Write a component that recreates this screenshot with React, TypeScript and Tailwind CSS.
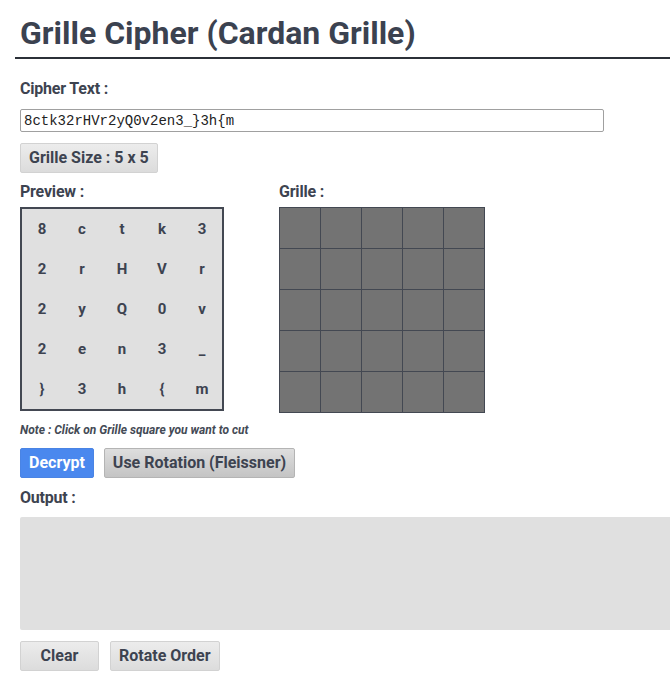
import { useState } from "react";

const CIPHER = "8ctk32rHVr2yQ0v2en3_}3h{m";

export default function App() {
  const [text, setText] = useState(CIPHER);
  const [cut, setCut] = useState<boolean[]>(Array(25).fill(false));
  const chars = text.padEnd(25, " ").slice(0, 25).split("");

  const grayBtn =
    "h-[30px] px-[8px] rounded-[2px] border border-[#d2d2d2] bg-gradient-to-b from-[#ececec] to-[#dcdcdc] text-[#3d4350] text-[16px] font-bold";

  return (
    <div
      className="min-h-screen bg-white text-[#3d4350]"
      style={{ fontFamily: "Roboto, 'Liberation Sans', sans-serif" }}
    >
      <div className="pt-[13px]">
        <h1 className="ml-[15px] pl-[5px] pb-[4px] border-b-2 border-[#2b3038] text-[32px] leading-[40px] font-bold text-[#3b4250]">
          Grille Cipher (Cardan Grille)
        </h1>
      </div>

      <div className="pl-[20px]">
        <div className="mt-[20px] text-[16px] font-bold leading-[20px] tracking-[-0.2px]">Cipher Text :</div>
        <input
          value={text}
          onChange={(e) => setText(e.target.value)}
          className="mt-[10px] block w-[584px] h-[23px] px-[3px] border border-[#a0a0a0] rounded-[2px] text-[14px] text-[#222] outline-none"
          style={{ fontFamily: "'Liberation Mono', monospace" }}
        />
        <button type="button" className={`mt-[11px] ${grayBtn}`}>
          Grille Size : 5 x 5
        </button>

        <div className="mt-[9px] flex gap-[55px]">
          <div>
            <div className="text-[16px] font-bold leading-[20px] tracking-[-0.2px]">Preview :</div>
            <div className="mt-[5px] w-[204px] h-[204px] border-2 border-[#434852] bg-[#e0e0e0] grid grid-cols-5 grid-rows-5">
              {chars.map((c, i) => (
                <div
                  key={i}
                  className="flex items-center justify-center text-[15px] font-bold text-[#3d4350]"
                >
                  {c}
                </div>
              ))}
            </div>
          </div>
          <div>
            <div className="text-[16px] font-bold leading-[20px] tracking-[-0.2px]">Grille :</div>
            <div className="mt-[5px] w-[206px] h-[206px] border border-[#434852] bg-[#434852] grid grid-cols-5 grid-rows-5 gap-px">
              {cut.map((v, i) => (
                <div
                  key={i}
                  onClick={() =>
                    setCut((p) => p.map((x, j) => (j === i ? !x : x)))
                  }
                  className={v ? "bg-white" : "bg-[#737373]"}
                />
              ))}
            </div>
          </div>
        </div>

        <div className="mt-[9px] text-[12px] italic font-bold text-[#444a55] leading-[16px]">
          Note : Click on Grille square you want to cut
        </div>

        <div className="mt-[10px] flex gap-[10px]">
          <button
            type="button"
            className="h-[30px] px-[8px] rounded-[2px] border border-[#4a84e4] bg-[#4a88ee] text-white text-[16px] font-bold"
          >
            Decrypt
          </button>
          <button
            type="button"
            className="h-[30px] px-[8px] rounded-[2px] border border-[#b4b4b4] bg-gradient-to-b from-[#dedede] to-[#c4c4c4] text-[#3d4350] text-[16px] font-bold"
          >
            Use Rotation (Fleissner)
          </button>
        </div>

        <div className="mt-[10px] text-[16px] font-bold leading-[20px] tracking-[-0.2px]">Output :</div>
        <div className="mt-[9px] h-[113px] bg-[#e0e0e0] rounded-l-[2px]" />

        <div className="mt-[11px] flex gap-[11px]">
          <button type="button" className={`w-[79px] ${grayBtn}`}>
            Clear
          </button>
          <button type="button" className={grayBtn}>
            Rotate Order
          </button>
        </div>
      </div>
    </div>
  );
}
